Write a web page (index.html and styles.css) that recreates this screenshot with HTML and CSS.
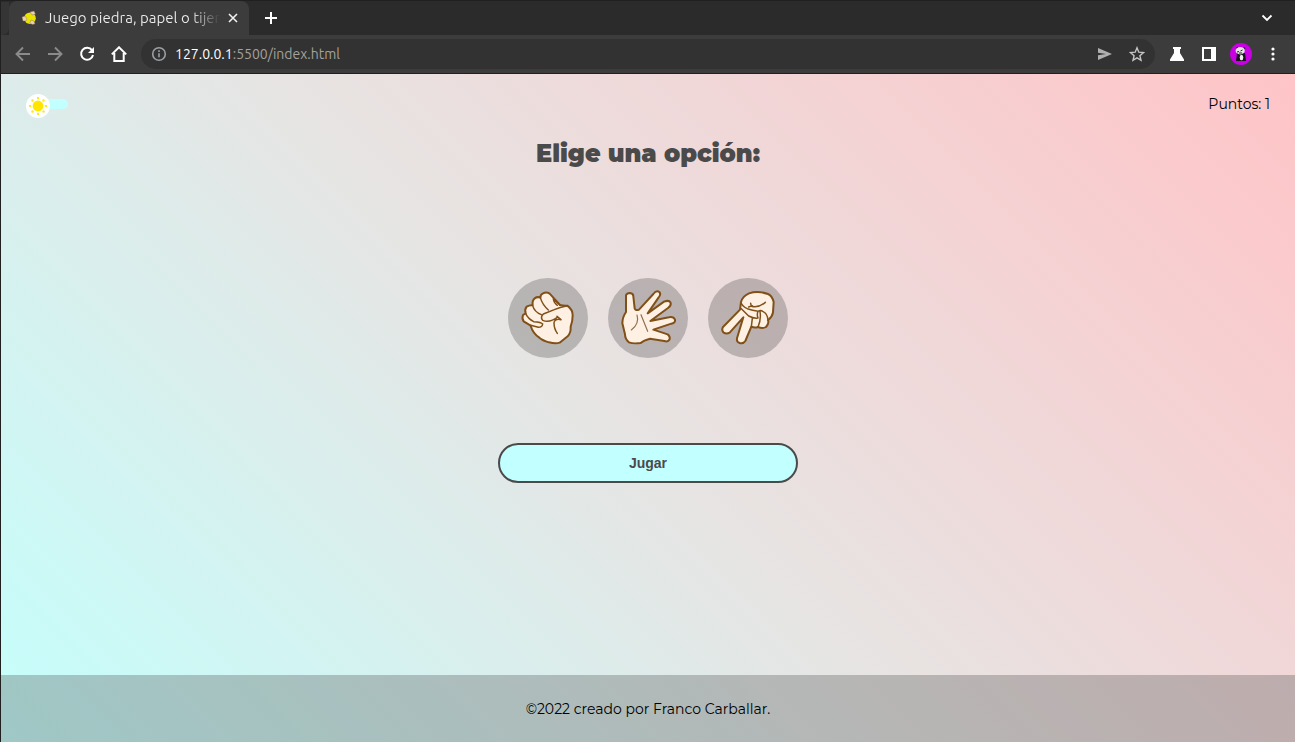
FILE: index.html
```html
<!DOCTYPE html>
<html lang="es">
<head>
<meta charset="utf-8">
<title>Juego piedra, papel o tijera</title>
<link rel="stylesheet" href="styles.css">
</head>
<body>
<div class="window">
  <header class="browser">
    <div class="tabs">
      <div class="edge"></div>
      <div class="tab">
        <svg class="favicon" viewBox="0 0 16 16"><circle cx="9" cy="8.200" r="5.800" fill="#e9e300"/><path d="M9 2l4-1 1.500 3-3.500 1zM1 7l3-1 2 3-1 2H2zM10 10l3 1 1 3-3 .5-2-2z" fill="#ead0b5" stroke="#80663e" stroke-width=".4"/></svg>
        <span class="tab-title">Juego piedra, papel o tijer</span>
        <svg class="close" viewBox="0 0 10 10"><path d="M1 1l8 8M9 1L1 9"/></svg>
      </div>
      <svg class="plus" viewBox="0 0 12 12"><path d="M6 0v12M0 6h12"/></svg>
      <svg class="chevron" viewBox="0 0 12 12"><path d="M1.500 3.500L6 8l4.500-4.500"/></svg>
    </div>
    <div class="toolbar">
      <svg class="nav dim" viewBox="0 0 16 16"><path d="M15 8H2M8 1.500L1.500 8 8 14.500"/></svg>
      <svg class="nav dim" viewBox="0 0 16 16"><path d="M1 8h13M8 1.500L14.500 8 8 14.500"/></svg>
      <svg class="nav" viewBox="0 0 16 16"><path d="M13 4.200A6 6 0 1 0 14 9"/><path d="M15 1v6H9z" fill="#fff" stroke="none"/></svg>
      <svg class="nav" viewBox="0 0 16 16"><path d="M.8 8.400L8 1.300l7.200 7.100M3.300 7v8.100h9.400V7"/></svg>
      <div class="address">
        <svg class="info" viewBox="0 0 16 16"><circle cx="8" cy="8" r="6.300"/><path d="M8 7.200v4M8 4.300v1.600"/></svg>
        <span class="url"><b>127.0.0.1</b>:5500/index.html</span>
        <svg class="send" viewBox="0 0 16 16"><path d="M1 2l14 6-14 6V9.300L9 8 1 6.700z"/></svg>
        <svg class="star" viewBox="0 0 16 16"><path d="M8 1.800l1.800 4.400 4.700.4-3.600 3.100 1.100 4.600L8 11.800l-4 2.500 1.100-4.600-3.600-3.100 4.700-.4z"/></svg>
      </div>
      <svg class="tool flask" viewBox="0 0 16 16"><path d="M4 1h8v2h-1v4l4 6.500V15H1v-1.500L5 7V3H4z"/></svg>
      <svg class="tool panel" viewBox="0 0 16 16"><path fill-rule="evenodd" d="M1 1h14v14H1zM3 3v10h7V3z"/></svg>
      <svg class="avatar" viewBox="0 0 22 22"><circle cx="11" cy="11" r="11" fill="#c900e4"/><path d="M7 10h8l1 8H6z" fill="#18101b"/><ellipse cx="10.200" cy="7.700" rx="4.600" ry="3.700" fill="#e5e5e5"/><path d="M6 5l2-1M14 4l1 2M7 9l2-.5M10.500 8l2-1M9 10h3" stroke="#24202a"/><ellipse cx="11.500" cy="14.500" rx="1.800" ry="2.700" fill="#eee"/></svg>
      <svg class="dots" viewBox="0 0 4 14"><circle cx="2" cy="2" r="1.600"/><circle cx="2" cy="7" r="1.600"/><circle cx="2" cy="12" r="1.600"/></svg>
    </div>
  </header>
  <div class="page">
    <div class="top">
      <div class="switch">
        <svg class="sun" viewBox="0 0 24 24"><circle cx="12" cy="12" r="12" fill="#fff"/><circle cx="12" cy="12" r="5.400" fill="#ffe500"/><g fill="#ffe81a"><path d="M11 3h2v2.200h-2zM11 18.800h2V21h-2zM3 11h2.200v2H3zM18.800 11H21v2h-2.200z"/><circle cx="6.500" cy="6.500" r="1.200"/><circle cx="17.500" cy="6.500" r="1.200"/><circle cx="6.500" cy="17.500" r="1.200"/><circle cx="17.500" cy="17.500" r="1.200"/></g></svg>
        <span class="track"></span>
      </div>
      <p class="points">Puntos: 1</p>
    </div>
    <main class="game">
      <h1 class="heading">Elige una opción:</h1>
      <div class="options">
        <button class="option" aria-label="Piedra"><svg class="hand" viewBox="24 24 240 240">
          <path d="M92 167L71 154Q65 145 69 135L77 130Q73 119 80 110Q90 104 98 106Q96 91 104 85Q112 79 121 83Q121 73 129 70Q139 64 149 71L180 105Q191 108 202 107Q218 119 218 136Q218 154 212 170Q213 189 203 199L179 218Q167 222 147 217Q127 211 118 203Q98 189 92 167Z"/>
          <path class="crease" d="M77 131Q84 146 101 155Q124 156 128 162Q127 172 115 172L92 166M98 107Q103 126 124 134M121 83Q127 104 145 120M160 87Q162 100 172 106M160 87L180 105M202 107Q179 111 163 119L130 132Q120 142 128 151Q149 160 173 141M171 139L183 149Q165 145 162 158Q162 176 172 190"/>
        </svg></button>
        <button class="option" aria-label="Papel"><svg class="hand" viewBox="24 24 240 240">
          <path d="M78 76Q80 69 90 69Q100 70 100 79L104 115Q107 123 117 119L160 72Q169 60 178 66Q184 73 176 82L143 130L192 95Q207 89 212 98Q214 107 204 114L151 153L207 142Q220 139 225 149Q227 158 214 161L160 179L203 193Q211 199 209 208Q204 217 193 213L150 206Q131 211 122 219Q99 222 87 217Q75 208 75 193L67 160Q67 142 78 126Z"/>
          <path class="line" d="M111 135Q119 161 94 180M123 134L143 184"/>
        </svg></button>
        <button class="option" aria-label="Tijera"><svg class="hand" viewBox="24 24 240 240">
          <path d="M120 119L69 171Q64 180 70 187Q79 193 89 188L130 142L111 205Q109 216 119 219Q130 222 136 213L154 170Q164 175 174 171Q188 177 198 171Q208 159 204 151Q217 140 219 127L221 96Q216 77 204 72Q174 61 147 70Q128 78 123 96Z"/>
          <path class="crease" d="M123 98Q127 109 142 116Q158 121 174 124Q170 134 174 144Q162 146 146 138L124 116M152 100L154 109Q175 115 196 97M146 111L157 107M174 124Q182 119 188 124Q203 130 204 151M180 125Q184 147 174 171M154 170L157 145"/>
        </svg></button>
      </div>
      <button class="play">Jugar</button>
    </main>
    <footer class="footer"><p class="credit">©2022 creado por Franco Carballar.</p></footer>
  </div>
</div>
</body>
</html>
```
FILE: styles.css
```css
* { box-sizing: border-box; }
body { margin: 0; }
p, h1 { margin: 0; }
svg { display: block; flex-shrink: 0; }
button { padding: 0; border: 0; }
.window { display: flex; flex-direction: column; height: 742px; overflow: hidden; border-left: 1px solid #202020; }
.browser { height: 74px; background: #3c3c3c; border-bottom: 1px solid #202020; font-family: "Ubuntu", "Open Sans", "Noto Sans", sans-serif; }
.tabs { display: flex; align-items: center; height: 35px; background: #2b2b2b; border-top: 1px solid #202020; }
.edge { width: 8px; height: 33px; background: #353535; border-radius: 0 0 7px 0; }
.tab { display: flex; align-items: center; width: 240px; height: 34px; padding: 0 10px 0 12px; background: #3c3c3c; border-radius: 8px 8px 0 0; }
.favicon { width: 16px; height: 16px; }
.tab-title { width: 176px; margin-left: 8px; white-space: nowrap; font-size: 15px; line-height: 22px; background: linear-gradient(90deg, #eee 146px, #3c3c3c 175px); -webkit-background-clip: text; background-clip: text; color: transparent; }
.close { width: 10px; height: 10px; margin-left: 7px; fill: none; stroke: #f2f2f2; stroke-width: 1.6; }
.plus { width: 12px; height: 12px; margin-left: 16px; fill: none; stroke: #fff; stroke-width: 2; }
.chevron { width: 12px; height: 12px; margin-left: auto; margin-right: 22px; fill: none; stroke: #fff; stroke-width: 1.8; }
.toolbar { display: flex; align-items: center; height: 38px; padding-left: 14px; }
.nav { width: 16px; height: 16px; margin-right: 16px; fill: none; stroke: #fff; stroke-width: 2; }
.nav.dim { stroke: #8b8b8b; stroke-width: 1.9; }
.address { display: flex; align-items: center; width: 1014px; height: 30px; margin-left: -2px; padding: 0 10px; border-radius: 15px; background: #323232; }
.info { width: 16px; height: 16px; fill: none; stroke: #9c9fa3; stroke-width: 1.6; }
.url { margin-left: 8px; color: #a5a19b; font-size: 14px; line-height: 20px; white-space: nowrap; }
.url b { color: #fff; font-weight: 400; }
.send { width: 16px; height: 16px; margin-left: auto; fill: #b0b0b0; }
.star { width: 16px; height: 16px; margin-left: 16px; fill: none; stroke: #c4c4c4; stroke-width: 1.4; }
.tool { width: 16px; height: 16px; fill: #fff; }
.flask { margin-left: 14px; }
.panel { margin-left: 16px; }
.avatar { width: 22px; height: 22px; margin-left: 13px; }
.dots { width: 4px; height: 14px; margin-left: 19px; fill: #fff; }
.page { display: flex; flex-direction: column; flex: 1; background: linear-gradient(45deg, #c4fffc, #e7e4e3 48%, #ffc4c7); font-family: "Montserrat", "Inter", sans-serif; }
.top { display: flex; align-items: flex-start; justify-content: space-between; height: 61px; padding: 20px 25px 0; }
.switch { display: flex; }
.sun { width: 24px; height: 24px; z-index: 1; }
.track { width: 30px; height: 10px; margin: 5px 0 0 -12px; border-radius: 5px; background: #c2ffff; }
.points { font-size: 14px; line-height: 20px; color: #000; }
.game { display: flex; flex-direction: column; align-items: center; flex: 1; }
.heading { font-size: 24px; line-height: 38px; font-weight: 900; color: #4a4a4a; white-space: nowrap; }
.options { display: flex; gap: 20px; margin-top: 105px; }
.option { width: 80px; height: 80px; border-radius: 50%; background: rgba(74, 74, 74, .3); }
.hand { width: 80px; height: 80px; fill: #fff0e4; stroke: #805018; stroke-width: 6; stroke-linejoin: round; stroke-linecap: round; }
.hand .crease { fill: none; stroke-width: 4.5; }
.hand .line { fill: none; stroke-width: 3.5; stroke: #8d704f; }
.play { width: 300px; height: 40px; margin-top: 85px; border: 2px solid #4a4a4a; border-radius: 20px; background: #c2ffff; color: #4a4a4a; font: 700 14px "Liberation Sans", sans-serif; }
.footer { display: flex; align-items: center; justify-content: center; height: 67px; background: rgba(74, 74, 74, .3); }
.credit { font-size: 14px; line-height: 20px; color: #000; white-space: nowrap; }
```
